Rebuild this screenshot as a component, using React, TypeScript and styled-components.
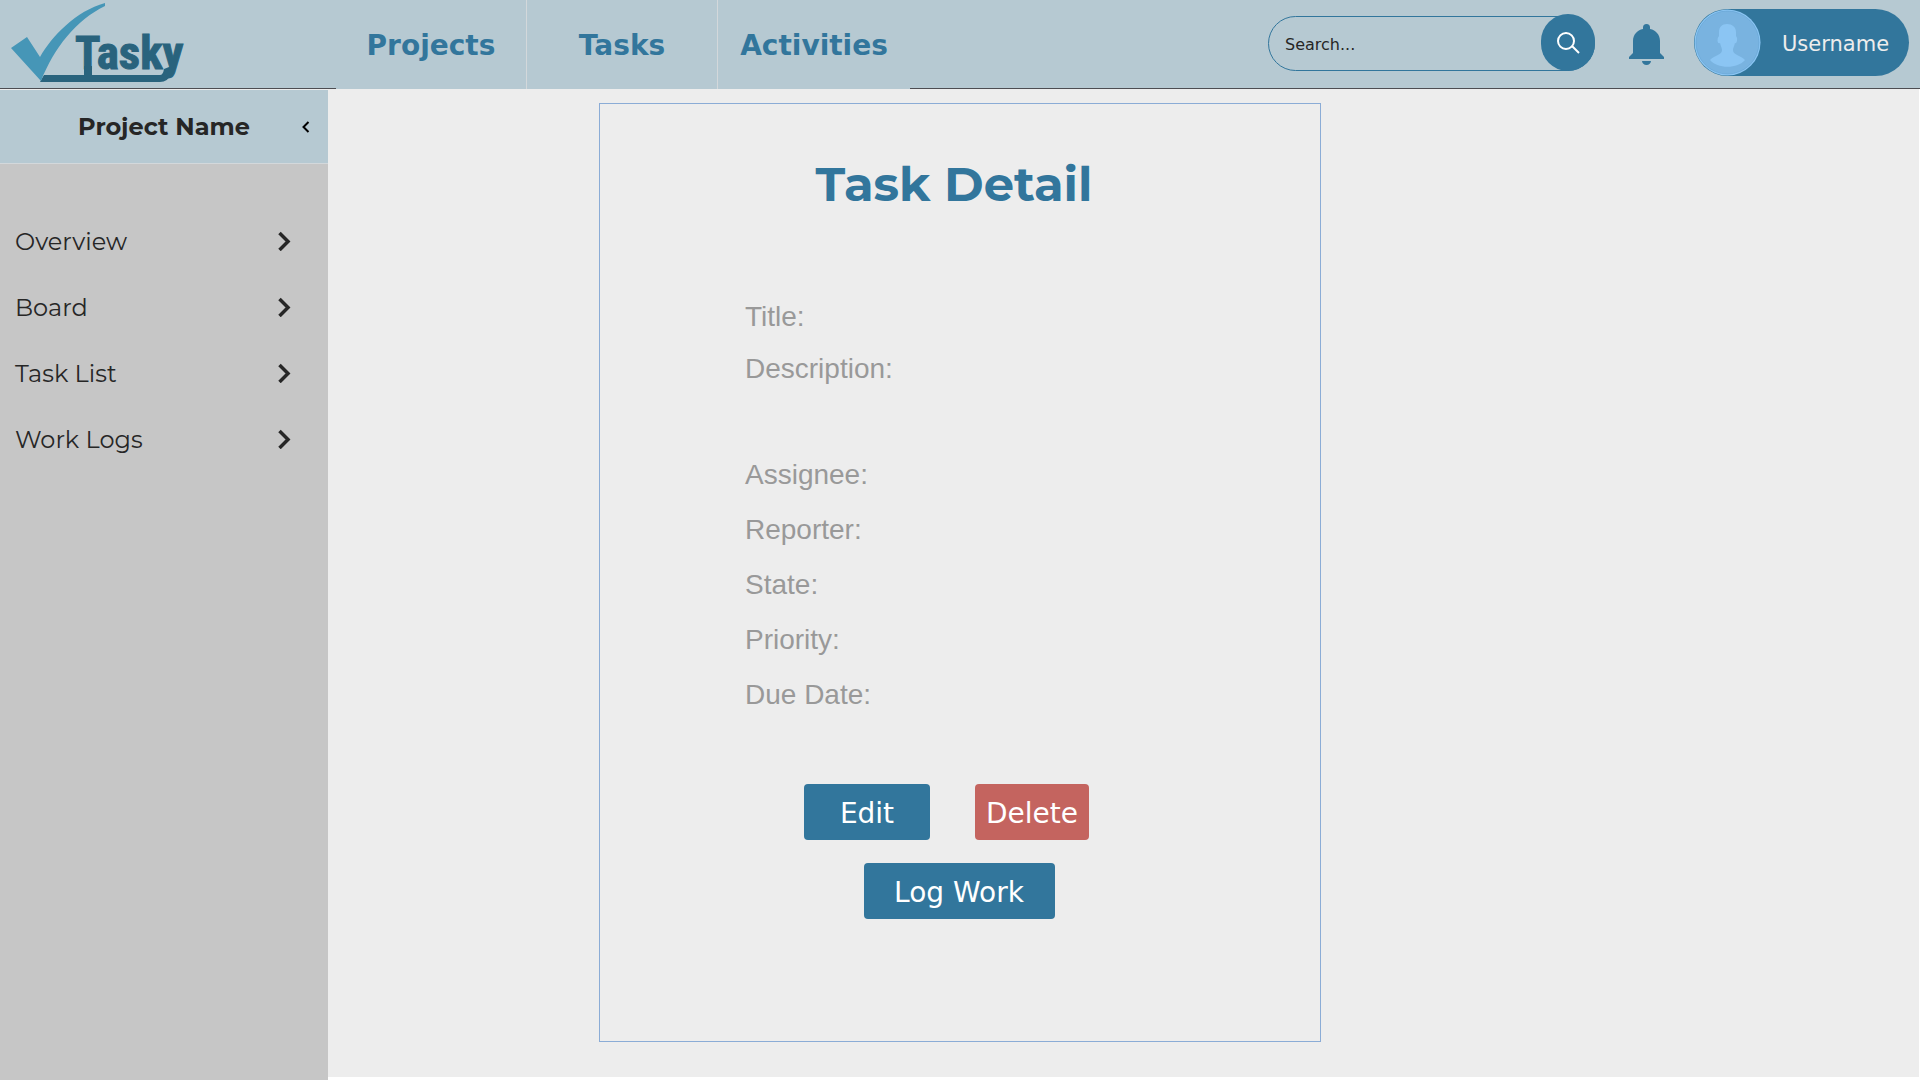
import React from "react";
import styled, { createGlobalStyle } from "styled-components";

const color = {
  header: "#b6c9d2",
  brand: "#32769c",
  page: "#ededed",
  sidebar: "#c6c6c6",
  ink: "#262626",
  muted: "#999999",
  danger: "#c4645f",
  frame: "#8bacd6",
};

const sans = `Verdana, "DejaVu Sans", sans-serif`;
const display = `Montserrat, Inter, sans-serif`;
const plain = `"Liberation Sans", Arial, sans-serif`;

const GlobalStyle = createGlobalStyle`
  *, *::before, *::after { box-sizing: border-box; }
  body { margin: 0; background: #ffffff; font-family: ${sans}; }
  button { font: inherit; border: 0; cursor: pointer; }
`;

const Page = styled.div`
  display: flex;
  flex-direction: column;
  min-height: 100vh;
`;

const Header = styled.header`
  display: flex;
  height: 89px;
  background: ${color.header};
  border-bottom: 1px solid #4d4d52;
`;

const Brand = styled.a`
  display: block;
  flex: 0 0 336px;
`;

const Nav = styled.nav`
  display: grid;
  grid-template-columns: 191px 191px 192px;
  margin-bottom: -1px;
  background: ${color.header};
`;

const NavLink = styled.a`
  display: flex;
  align-items: center;
  justify-content: center;
  padding-top: 2px;
  color: ${color.brand};
  font-size: 28px;
  font-weight: 700;
  text-decoration: none;

  &:not(:last-child) {
    border-right: 1px solid #d3d8db;
  }
`;

const Tools = styled.div`
  display: flex;
  align-items: center;
  gap: 30px;
  margin-left: auto;
  padding: 0 11px 3px 0;
`;

const Search = styled.form`
  display: flex;
  align-items: flex-end;
  margin-right: 4px;
`;

const SearchInput = styled.input`
  width: 327px;
  height: 55px;
  margin-right: -54px;
  padding: 2px 64px 0 16px;
  border: 1px solid ${color.brand};
  border-radius: 28px;
  background: transparent;
  color: ${color.ink};
  font-family: ${sans};
  font-size: 16px;

  &::placeholder {
    color: ${color.ink};
    opacity: 1;
  }
`;

const SearchButton = styled.button`
  display: grid;
  place-items: center;
  width: 54px;
  height: 57px;
  padding: 0;
  border-radius: 27px;
  background: ${color.brand};
`;

const IconButton = styled.button`
  display: grid;
  padding: 0;
  background: none;
`;

const UserButton = styled.button`
  display: flex;
  align-items: center;
  gap: 21px;
  width: 215px;
  height: 67px;
  padding: 0;
  border-radius: 34px;
  background: ${color.brand};
  color: ${color.page};
  font-size: 21px;

  span { padding-top: 2px; }
`;

const Body = styled.div`
  display: flex;
  flex: 1;
`;

const Sidebar = styled.aside`
  flex: 0 0 328px;
  border-top: 1px solid ${color.page};
  background: ${color.sidebar};
`;

const ProjectBar = styled.div`
  display: grid;
  grid-template-columns: 1fr auto;
  align-items: center;
  height: 74px;
  padding: 0 15px 0 29px;
  border-bottom: 1px solid #d3d8db;
  background: ${color.header};
`;

const ProjectName = styled.h2`
  margin: 0;
  color: ${color.ink};
  font-family: ${display};
  font-size: 24px;
  font-weight: 700;
  line-height: 32px;
  text-align: center;
`;

const CollapseButton = styled.button`
  display: grid;
  place-items: center;
  width: 14px;
  height: 32px;
  padding: 0;
  background: none;
`;

const Menu = styled.ul`
  margin: 0;
  padding: 44px 0 0;
  list-style: none;
`;

const MenuLink = styled.a`
  display: flex;
  align-items: center;
  justify-content: space-between;
  height: 66px;
  padding: 0 37px 0 15px;
  color: ${color.ink};
  font-family: ${display};
  font-size: 24px;
  text-decoration: none;
`;

const Main = styled.main`
  display: grid;
  grid-template-columns: 271fr 722fr 598fr;
  flex: 1;
  margin: 0 1px 3px 0;
  padding: 14px 0 35px;
  background: ${color.page};
`;

const Card = styled.article`
  grid-column: 2;
  padding: 50px 147px 122px 145px;
  border: 1px solid ${color.frame};
`;

const Title = styled.h1`
  margin: 0 10px 87px 0;
  color: ${color.brand};
  font-family: ${display};
  font-size: 48px;
  font-weight: 700;
  line-height: 60px;
  text-align: center;
  white-space: nowrap;
`;

const Fields = styled.dl<{ $gap: number }>`
  display: grid;
  gap: ${(p) => p.$gap}px;
  margin: 0 0 74px;
  color: ${color.muted};
  font-family: ${plain};
  font-size: 28px;
  line-height: 32px;

  &:last-of-type { margin-bottom: 73px; }
`;

const Field = styled.div`
  display: flex;

  dt, dd { margin: 0; }
`;

const Actions = styled.div`
  display: flex;
  flex-direction: column;
  align-items: center;
  gap: 23px;
`;

const ActionRow = styled.div`
  display: flex;
  gap: 45px;
  margin-right: 25px;
`;

const Action = styled.button<{ $width: number; $tone?: string }>`
  width: ${(p) => p.$width}px;
  height: 56px;
  padding: 2px 0 0;
  border-radius: 4px;
  background: ${(p) => p.$tone ?? color.brand};
  color: #ffffff;
  font-size: 28px;
`;

const Logo = () => (
  <svg width="190" height="88" viewBox="0 0 190 88" role="img" aria-label="Tasky">
    <path d="M44 75H160Q163 75 164 69L174 65L170 75Q168 82 160 82H40Z" fill="#29637d" />
    <path d="M84 66H92V78H84Z" fill="#29637d" />
    <text
      x="75"
      y="69"
      fill="#29637d"
      stroke="#29637d"
      strokeWidth="1"
      fontFamily="'Liberation Sans Narrow', 'Arial Narrow', 'Roboto Condensed', 'DejaVu Sans Condensed', sans-serif"
      fontSize="47"
      fontWeight="700"
    >
      Tasky
    </text>
    <path d="M11 48L27 37L40 57C52 36 76 11 105 3V6C76 20 54 48 41 81Z" fill="#4696b7" />
  </svg>
);

const SearchIcon = () => (
  <svg width="26" height="26" viewBox="0 0 26 26" fill="none" stroke="#ffffff" strokeWidth="2" aria-hidden="true">
    <circle cx="11" cy="11" r="8" />
    <path d="M17 16L24 23" />
  </svg>
);

const BellIcon = () => (
  <svg width="35" height="45" viewBox="0 0 35 45" fill={color.brand} aria-hidden="true">
    <path d="M14 9V7.500a3.500 3.500 0 0 1 7 0V9C27 10 31 15 31 21V33L35 37V39H0V37L4 33V21C4 15 8 10 14 9Z" />
    <path d="M13 41H22C22 43 20 45 17.500 45S13 43 13 41Z" />
  </svg>
);

const Avatar = () => (
  <svg width="67" height="67" viewBox="0 0 67 67" aria-hidden="true">
    <circle cx="33.500" cy="33.500" r="33" fill="#8bc5f3" />
    <circle cx="33.500" cy="33.500" r="31.500" fill="#79b3e0" stroke="#5f9fce" strokeWidth="0.500" />
    <path
      d="M33 15C38 15 42 18 42 23V27Q44 29 43 32Q42 35 41 34C40 38 39 39 39 41C39 46 46 46 51 51C44 60 23 60 16 51C21 46 28 46 28 41C28 39 27 38 26 34Q24 35 23.500 32Q23 29 25 27V23C25 18 28 15 33 15Z"
      fill="#8bc5f3"
    />
  </svg>
);

const ChevronRight = () => (
  <svg width="13" height="20" viewBox="0 0 13 20" fill="none" stroke={color.ink} strokeWidth="3.500" aria-hidden="true">
    <path d="M1.500 2L10 10.500L1.500 19" />
  </svg>
);

const ChevronLeft = () => (
  <svg width="8" height="12" viewBox="0 0 8 12" fill="none" stroke="#000000" strokeWidth="2" aria-hidden="true">
    <path d="M6.500 1L1.500 6L6.500 11" />
  </svg>
);

const sections = ["Projects", "Tasks", "Activities"];
const menu = ["Overview", "Board", "Task List", "Work Logs"];
const summary = ["Title:", "Description:"];
const details = ["Assignee:", "Reporter:", "State:", "Priority:", "Due Date:"];

const FieldList = ({ names, gap }: { names: string[]; gap: number }) => (
  <Fields $gap={gap}>
    {names.map((name) => (
      <Field key={name}>
        <dt>{name}</dt>
        <dd />
      </Field>
    ))}
  </Fields>
);

export default function App() {
  return (
    <Page>
      <GlobalStyle />
      <Header>
        <Brand href="#home">
          <Logo />
        </Brand>
        <Nav>
          {sections.map((name) => (
            <NavLink key={name} href={`#${name.toLowerCase()}`}>
              {name}
            </NavLink>
          ))}
        </Nav>
        <Tools>
          <Search role="search" onSubmit={(e) => e.preventDefault()}>
            <SearchInput type="search" placeholder="Search..." aria-label="Search" />
            <SearchButton type="submit" aria-label="Submit search">
              <SearchIcon />
            </SearchButton>
          </Search>
          <IconButton type="button" aria-label="Notifications">
            <BellIcon />
          </IconButton>
          <UserButton type="button">
            <Avatar />
            <span>Username</span>
          </UserButton>
        </Tools>
      </Header>
      <Body>
        <Sidebar>
          <ProjectBar>
            <ProjectName>Project Name</ProjectName>
            <CollapseButton type="button" aria-label="Collapse sidebar">
              <ChevronLeft />
            </CollapseButton>
          </ProjectBar>
          <Menu>
            {menu.map((name) => (
              <li key={name}>
                <MenuLink href={`#${name.toLowerCase().replace(" ", "-")}`}>
                  {name}
                  <ChevronRight />
                </MenuLink>
              </li>
            ))}
          </Menu>
        </Sidebar>
        <Main>
          <Card>
            <Title>Task Detail</Title>
            <FieldList names={summary} gap={20} />
            <FieldList names={details} gap={23} />
            <Actions>
              <ActionRow>
                <Action type="button" $width={126}>Edit</Action>
                <Action type="button" $width={114} $tone={color.danger}>Delete</Action>
              </ActionRow>
              <Action type="button" $width={191}>Log Work</Action>
            </Actions>
          </Card>
        </Main>
      </Body>
    </Page>
  );
}
